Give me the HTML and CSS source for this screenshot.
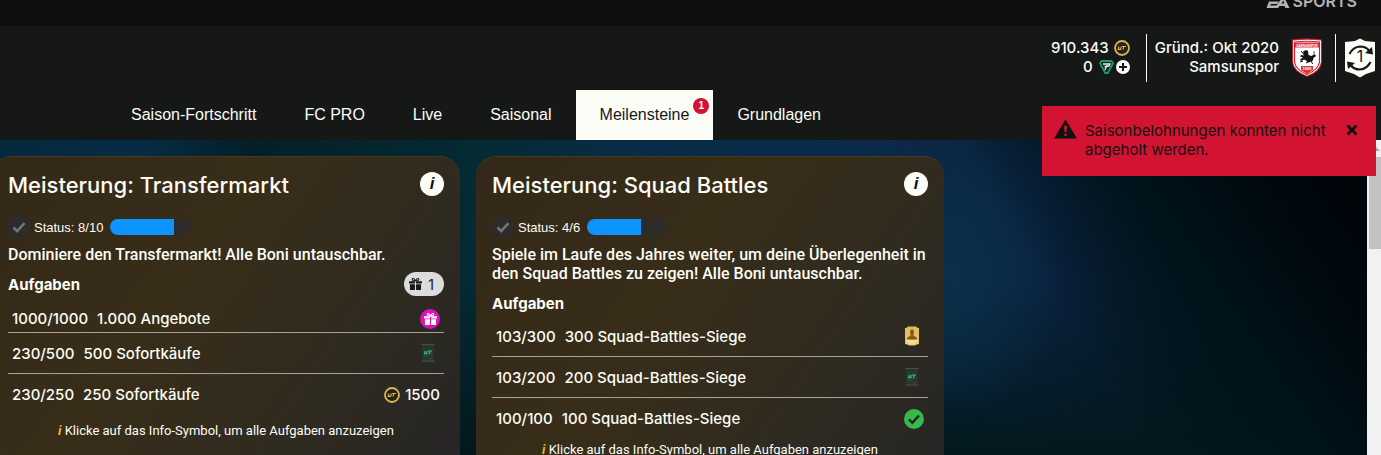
FILE: index.html
```
<!DOCTYPE html>
<html lang="de">
<head>
  <meta charset="UTF-8" />
  <meta name="viewport" content="width=device-width, initial-scale=1.0">
  <title>Meilensteine</title>
  <link rel="stylesheet" href="styles.css">
</head>
<body>
  <svg class="defs" aria-hidden="true">
    <symbol id="coin" viewBox="0 0 16 16">
      <circle cx="8" cy="8" r="7" fill="#25221c" stroke="#d9b354" stroke-width="1.8"/>
      <path d="M5 6.5 4.2 9.4h2.4l.8-2.9M8 6.5h4M9.8 6.5 9 9.6" fill="none" stroke="#d9b354" stroke-width="1.1"/>
    </symbol>
    <symbol id="gift" viewBox="0 0 14 13">
      <path d="M0 3.5h6.4V6H0zM7.6 3.5H14V6H7.6zM1 6.8h5.4V13H1zM7.6 6.8H13V13H7.6z" fill="currentColor"/>
      <path d="M7 3.3C5.8.3 3.3-.2 3.4 1.6 3.5 2.9 5.4 3.2 7 3.3 8.2.3 10.7-.2 10.6 1.6 10.5 2.9 8.6 3.2 7 3.3" fill="none" stroke="currentColor" stroke-width="1.1"/>
    </symbol>
    <symbol id="check" viewBox="0 0 22 22">
      <path d="m5.5 11.500 3.700 3.700 7.300-8" fill="none" stroke="currentColor" stroke-width="2.6"/>
    </symbol>
    <symbol id="pack" viewBox="0 0 14 20">
      <path d="M.5.5h13l-1 9 1 10H.5l1-10z" fill="#29352f"/>
      <path d="M.5 1.5h13M.5 18h13" stroke="#46504b"/>
      <path d="m2 14 9-3M6 19l6-5" stroke="#37453e" stroke-width="1.5"/>
      <path d="M4.300 8 3.500 10.600h2.200L6.500 8M7 8h4M9.200 8l-.8 3" fill="none" stroke="#20c878" stroke-width="1.2"/>
    </symbol>
  </svg>

  <div class="topbar">
    <span class="brand">
      <svg class="ea" viewBox="0 0 26 12" aria-hidden="true">
        <path d="M4 1h11l-2 3H2zM2.500 5.500h10L10.500 8H4.500L3.500 9.500H10L17 0l6 12h-4l-1-2h-5l-1.500 2H0z" fill="#b4b4b4"/>
        <path d="M17 4.500 14.800 7.500h2.900z" fill="#0f0f0f"/>
      </svg>SPORTS
    </span>
  </div>

  <header class="header">
    <div class="user-bar">
      <div class="currencies">
        <div class="currency">910.343 <svg class="coin"><use href="#coin"/></svg></div>
        <div class="currency points">0
          <svg class="points-icon" viewBox="0 0 15 14" aria-hidden="true">
            <path d="M2.500 1h10L14 3.300 8.800 13H6.200L1 3.300z" fill="#12211b" stroke="#169b63" stroke-width="1.8"/>
            <path d="M4 4h7L10 6H7.600L6 10M5.500 6.500h3" fill="none" stroke="#eee" stroke-width="1.3"/>
          </svg>
          <button class="plus" aria-label="Punkte kaufen">
            <svg viewBox="0 0 14 14"><path d="M7 3v8M3 7h8" stroke="#161817" stroke-width="2"/></svg>
          </button>
        </div>
      </div>
      <div class="club">
        <div class="club-name">Gründ.: Okt 2020<br>Samsunspor</div>
        <svg class="crest" viewBox="0 0 32 40" aria-hidden="true">
          <path d="M1 1.500Q16-.5 31 1.500V24Q30 34 16 39 2 34 1 24z" fill="#c8202c"/>
          <path d="M2 2.500Q16 .8 30 2.500V24Q29 33 16 37.800 3 33 2 24z" fill="#fff"/>
          <path d="M3.500 4Q16 2.500 28.500 4V24Q27 32 16 36.500 5 32 3.500 24z" fill="#fff" stroke="#c8202c" stroke-width="1.2"/>
          <path d="M4 4.500h24v5H4z" fill="#d8343e"/>
          <path d="M10 28h12v4l-6 4-6-4z" fill="#d8343e"/>
          <text x="16" y="8.500" class="crest-name">SAMSUNSPOR</text>
          <text x="16" y="32" class="crest-year">1965</text>
          <path d="M12 13.500 15 12l2 1 .5 4 3 1 3-2 1.500 2-2.500 2-.5 2.500L19 24l-4 1.500 1-2.500-3-1.500-3 1.500-1-1.500 3-2-3-1 1-1.500 3 .5z" fill="#141414"/>
          <path d="m10 13 4 5M20 22l1.500 4M9 24l3-1M23 15.500v-2" stroke="#141414"/>
        </svg>
      </div>
      <button class="swap" aria-label="SBC">
        <svg viewBox="0 0 32 40">
          <path d="M1 4 11 3 16 .5 21 3l10 1v29l-9 3-6 3.500L10 36l-9-3z" fill="#fcfdf7"/>
          <path d="M5.500 16Q9 9 16 8.500q6 0 9 4M26.500 24Q23 31 16 31.500q-6 0-9-4" fill="none" stroke="#161817" stroke-width="2.2"/>
          <path d="m28 9 1 7.500-8-1.500zM4 31l-1-7.500 8 1.500z" fill="#161817"/>
          <text x="16" y="24" class="swap-count">1</text>
        </svg>
      </button>
    </div>
    <nav class="tabs">
      <a class="tab" href="#">Saison-Fortschritt</a>
      <a class="tab" href="#">FC PRO</a>
      <a class="tab" href="#">Live</a>
      <a class="tab" href="#">Saisonal</a>
      <a class="tab active" href="#">Meilensteine<span class="tab-badge">1</span></a>
      <a class="tab" href="#">Grundlagen</a>
    </nav>
  </header>

  <main class="content">
    <div class="cards">
      <section class="card">
        <div class="card-head">
          <h2>Meisterung: Transfermarkt</h2>
          <button class="info-btn" aria-label="Info">i</button>
        </div>
        <div class="status">
          <svg class="status-check"><use href="#check"/></svg>
          <span>Status: 8/10</span>
          <div class="bar"><div class="bar-fill" style="width: 80%"></div></div>
        </div>
        <p class="desc">Dominiere den Transfermarkt! Alle Boni untauschbar.</p>
        <div class="tasks-head">
          <h3>Aufgaben</h3>
          <span class="reward-pill"><svg><use href="#gift"/></svg>1</span>
        </div>
        <ul class="tasks claimable">
          <li><span>1000/1000</span><span class="task-name">1.000 Angebote</span><span class="gift-dot"><svg><use href="#gift"/></svg></span></li>
          <li><span>230/500</span><span class="task-name">500 Sofortkäufe</span><svg class="pack"><use href="#pack"/></svg></li>
          <li><span>230/250</span><span class="task-name">250 Sofortkäufe</span><svg class="coin"><use href="#coin"/></svg><span class="amount">1500</span></li>
        </ul>
        <p class="hint"><i>i</i> Klicke auf das Info-Symbol, um alle Aufgaben anzuzeigen</p>
      </section>

      <section class="card">
        <div class="card-head">
          <h2>Meisterung: Squad Battles</h2>
          <button class="info-btn" aria-label="Info">i</button>
        </div>
        <div class="status">
          <svg class="status-check"><use href="#check"/></svg>
          <span>Status: 4/6</span>
          <div class="bar"><div class="bar-fill" style="width: 67%"></div></div>
        </div>
        <p class="desc">Spiele im Laufe des Jahres weiter, um deine Überlegenheit in den Squad Battles zu zeigen! Alle Boni untauschbar.</p>
        <div class="tasks-head">
          <h3>Aufgaben</h3>
        </div>
        <ul class="tasks">
          <li><span>103/300</span><span class="task-name">300 Squad-Battles-Siege</span>
            <svg class="pack" viewBox="0 0 14 20" aria-hidden="true">
              <path d="M0 2Q2 2 3 .5h8Q12 2 14 2v16q-2 0-4 1.500H4Q2 18 0 18z" fill="#e2bd62"/>
              <path d="M1 13.500h12V17q-2 0-3.500 1.500h-5Q3 17 1 17z" fill="#f3dc98"/>
              <path d="M2 13.500q0-3 3.500-3.500V8.500q-1.500-5 1.500-5t1.500 5V10q3.500.5 3.500 3.500z" fill="#80591a"/>
            </svg>
          </li>
          <li><span>103/200</span><span class="task-name">200 Squad-Battles-Siege</span><svg class="pack"><use href="#pack"/></svg></li>
          <li><span>100/100</span><span class="task-name">100 Squad-Battles-Siege</span><svg class="done"><use href="#check"/></svg></li>
        </ul>
        <p class="hint"><i>i</i> Klicke auf das Info-Symbol, um alle Aufgaben anzuzeigen</p>
      </section>
    </div>
    <div class="scrollbar"><span class="scroll-up"></span><div class="scroll-thumb"></div></div>
  </main>

  <div class="toast" role="alert">
    <svg class="warn" viewBox="0 0 24 20" aria-hidden="true">
      <path d="m12 0 12 20H0z" fill="#111"/>
      <path d="M10.500 6.500h3l-.5 7h-2zM10.800 15h2.400v2.400h-2.400z" fill="#d31332"/>
    </svg>
    <p>Saisonbelohnungen konnten nicht abgeholt werden.</p>
    <button class="close" aria-label="Schließen">
      <svg viewBox="0 0 12 12"><path d="m1.500 1.500 9 9M10.500 1.500l-9 9" stroke="#111" stroke-width="3"/></svg>
    </button>
  </div>
</body>
</html>
```
FILE: styles.css
```
* { margin: 0; padding: 0; box-sizing: border-box; }
html, body { height: 100%; }
body {
  position: relative;
  display: flex;
  flex-direction: column;
  overflow: hidden;
  background: #000;
  color: #fcfdf7;
  font-family: Inter, "Liberation Sans", sans-serif;
  font-size: 15px;
  font-weight: 500;
  line-height: 19px;
}
button { border: none; background: none; cursor: pointer; font-family: inherit; }
svg { display: block; flex-shrink: 0; }
.defs { position: absolute; width: 0; height: 0; }

.topbar {
  flex: none;
  height: 26px;
  overflow: hidden;
  background: #0f0f0f;
  padding-right: 24px;
}
.brand {
  display: flex;
  justify-content: flex-end;
  align-items: center;
  margin-top: -8px;
  color: #b4b4b4;
  font-size: 16px;
  font-weight: 600;
  line-height: 19px;
}
.ea { width: 27px; height: 12px; }

.header { flex: none; background: #161817; padding-top: 8px; }
.user-bar {
  display: flex;
  justify-content: flex-end;
  height: 48px;
  padding-right: 5px;
}
.currencies { padding: 4px 16px 0 0; border-right: 1px solid #fcfdf7; }
.currency { display: flex; align-items: center; justify-content: flex-end; gap: 5px; }
.currency.points { gap: 2px; }
.points-icon { width: 15px; height: 14px; margin-left: 4px; }
.coin { width: 16px; height: 16px; }
.plus { width: 14px; height: 14px; border-radius: 50%; background: #fcfdf7; }
.club {
  display: flex;
  gap: 12px;
  padding: 4px 12px 0 8px;
  border-right: 1px solid #fcfdf7;
  text-align: right;
}
.crest { width: 32px; height: 40px; }
.crest-name, .crest-year {
  fill: #fff;
  font-family: "Liberation Sans", sans-serif;
  font-size: 4px;
  font-weight: bold;
  text-anchor: middle;
}
.crest-name { font-size: 3px; }
.swap { padding-left: 8px; }
.swap svg { width: 32px; height: 40px; }
.swap-count { font-family: Inter, sans-serif; font-size: 16px; text-anchor: middle; fill: #161817; }

.tabs { display: flex; padding: 8px 0 0 107px; }
.tab {
  position: relative;
  padding: 0 24px;
  color: #fcfdf7;
  font-family: "Liberation Sans", sans-serif;
  font-size: 16px;
  font-weight: 400;
  line-height: 50px;
  text-decoration: none;
}
.tab.active { background: #fcfdf7; color: #161817; }
.tab-badge {
  position: absolute;
  top: 8px;
  right: 4px;
  width: 16px;
  height: 16px;
  border-radius: 50%;
  background: #d31332;
  color: #fff;
  font-size: 10px;
  font-weight: bold;
  line-height: 16px;
  text-align: center;
}

.content {
  flex: 1;
  min-height: 0;
  display: flex;
  overflow: hidden;
  background:
    linear-gradient(56deg, transparent 73%, #00131a 83%, #000a10 90%, #000306 100%),
    radial-gradient(ellipse 110px 150px at 69% 42%, #0b3049 0%, transparent 100%),
    linear-gradient(0deg, #03181d 0%, transparent 55%),
    linear-gradient(90deg, #06283f 0%, #062c45 10%, #03202a 18%, #042a33 34%, #082d48 46%, #0b2a4a 62%, #0a2240 76%, #071a2c 84%, #01070c 96%, #000204 100%);
}
.cards {
  flex: 1;
  display: grid;
  grid-template-columns: repeat(2, minmax(0, 468px));
  align-items: start;
  gap: 16px;
  margin-left: -8px;
  padding-top: 16px;
}
.card {
  padding: 15px 16px 40px;
  border-top: 1px solid #4b3918;
  border-radius: 20px;
  background: linear-gradient(125deg, #342918 0%, #382d19 40%, #302b20 70%, #252526 100%);
}
.card-head { display: flex; justify-content: space-between; align-items: flex-start; }
.card h2 { font-size: 22px; font-weight: 500; line-height: 26px; }
.info-btn {
  width: 24px;
  height: 24px;
  border-radius: 50%;
  background: #fcfdf7;
  color: #111;
  font-family: "Liberation Sans", sans-serif;
  font-size: 17px;
  font-style: italic;
  font-weight: bold;
  line-height: 24px;
}
.status {
  display: flex;
  align-items: center;
  margin-top: 18px;
  font-family: "Liberation Sans", sans-serif;
  font-size: 13px;
  font-weight: 400;
}
.status-check {
  width: 22px;
  height: 22px;
  margin-right: 4px;
  border-radius: 50%;
  background: #2c2c2d;
  color: #747474;
}
.bar {
  width: 80px;
  height: 16px;
  margin-left: 7px;
  overflow: hidden;
  border-radius: 8px;
  background: #2c2c2d;
}
.bar-fill { height: 100%; background: #0d94ff; }
.desc { margin-top: 7px; font-family: Roboto, sans-serif; font-size: 16px; }
.tasks-head { display: flex; justify-content: space-between; align-items: flex-start; margin-top: 8px; height: 25px; }
.tasks-head h3 { font-size: 15px; font-weight: 700; line-height: 26px; }
.reward-pill {
  display: flex;
  align-items: center;
  gap: 6px;
  height: 24px;
  padding: 0 10px 0 5px;
  border-radius: 12px;
  background: #dcdcdc;
  color: #161817;
  font-size: 14px;
  font-weight: 400;
}
.reward-pill svg, .gift-dot svg { width: 13px; height: 12px; }
.tasks { list-style: none; }
.tasks li {
  display: flex;
  align-items: center;
  gap: 9px;
  height: 41px;
  padding: 0 4px;
  border-bottom: 1px solid #a4a297;
}
.tasks li:last-child { border-bottom: none; }
.tasks.claimable { padding-bottom: 5px; }
.tasks.claimable li:first-child { height: 36px; padding-top: 8px; }
.task-name { flex: 1; }
.gift-dot {
  display: grid;
  place-items: center;
  width: 20px;
  height: 20px;
  border-radius: 50%;
  background: #dc12b9;
  color: #fff;
}
.pack { width: 14px; height: 20px; margin-right: 5px; }
.done { width: 20px; height: 20px; border-radius: 50%; background: #35b948; color: #222; }
.amount { margin-left: -4px; }
.hint {
  margin-top: 1px;
  font-family: Roboto, sans-serif;
  font-size: 13px;
  font-weight: 400;
  text-align: center;
}
.hint i { color: #f5b51b; font-weight: bold; }

.scrollbar { flex: none; width: 14px; background: #f1f1f1; padding: 7px 0 0 2px; }
.scroll-up {
  display: block;
  width: 0;
  margin-left: 3px;
  border: 4px solid transparent;
  border-top: none;
  border-bottom-color: #a3a3a3;
}
.scroll-thumb { height: 92px; margin-top: 6px; background: #c1c1c1; }

.toast {
  position: absolute;
  top: 106px;
  right: 5px;
  display: flex;
  align-items: flex-start;
  width: 334px;
  min-height: 70px;
  padding: 13px 18px 16px 12px;
  background: #d31332;
  color: #111;
  font-weight: 400;
}
.warn { width: 23px; height: 20px; margin-right: 8px; }
.toast p { flex: 1; padding-top: 2px; }
.close { padding-top: 5px; }
.close svg { width: 12px; height: 12px; }
```
